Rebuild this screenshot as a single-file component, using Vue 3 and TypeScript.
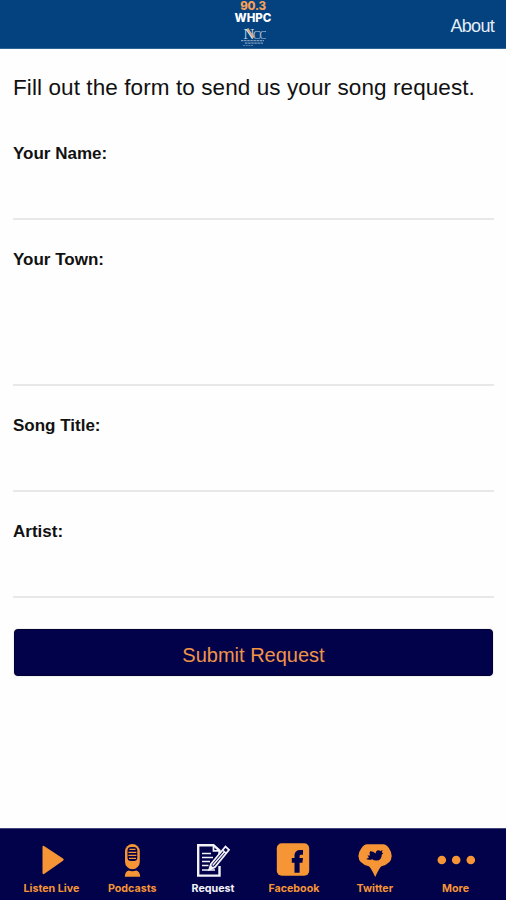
<script setup lang="ts">
import { ref } from 'vue'

interface Field {
  id: string
  label: string
  multiline?: boolean
}

interface Tab {
  id: string
  label: string
}

const fields: Field[] = [
  { id: 'name', label: 'Your Name:' },
  { id: 'town', label: 'Your Town:', multiline: true },
  { id: 'title', label: 'Song Title:' },
  { id: 'artist', label: 'Artist:' },
]

const tabs: Tab[] = [
  { id: 'listen', label: 'Listen Live' },
  { id: 'podcasts', label: 'Podcasts' },
  { id: 'request', label: 'Request' },
  { id: 'facebook', label: 'Facebook' },
  { id: 'twitter', label: 'Twitter' },
  { id: 'more', label: 'More' },
]

const values = ref<Record<string, string>>({ name: '', town: '', title: '', artist: '' })
const active = ref('request')
</script>

<template>
  <div class="screen">
    <header class="topbar">
      <div class="brand">
        <span class="freq">90.3</span>
        <span class="call">WHPC</span>
        <svg class="crest" width="26" height="23" viewBox="0 0 26 23">
          <text class="crest-text" x="3.5" y="13.5"><tspan class="crest-n">N</tspan><tspan class="crest-cc">CC</tspan></text>
          <path d="M7.5 3.5L13.6 12.5" stroke="#e3ab80" stroke-width="1.8" />
          <path d="M1 15.7H24M5 18.1H23" stroke="#7f9dbe" stroke-width="1.2" stroke-dasharray="2.5 .6" />
          <path d="M3 20.5H13" stroke="#587fab" stroke-width="1" stroke-dasharray="2 .7" />
        </svg>
      </div>
      <a class="about">About</a>
    </header>

    <main class="content">
      <p class="intro"><span>Fill out the form to send us your song request.</span></p>
      <form class="form" @submit.prevent>
        <div v-for="f in fields" :key="f.id" class="field">
          <label :for="f.id"><span>{{ f.label }}</span></label>
          <textarea v-if="f.multiline" :id="f.id" v-model="values[f.id]" class="control tall"></textarea>
          <input v-else :id="f.id" v-model="values[f.id]" class="control" type="text" />
        </div>
        <button class="submit" type="submit"><span>Submit Request</span></button>
      </form>
    </main>

    <nav class="tabs">
      <button
        v-for="t in tabs"
        :key="t.id"
        type="button"
        class="tab"
        :class="[t.id, { active: active === t.id }]"
        @click="active = t.id"
      >
        <svg class="icon" width="40" height="36" viewBox="0 0 40 36" fill="currentColor">
          <path
            v-if="t.id === 'listen'"
            d="M11.5 5.2Q11.5 3 13.4 4.2L32 16.6Q33.6 17.7 32 18.8L13.4 31.8Q11.5 33 11.5 30.8Z"
          />
          <g v-else-if="t.id === 'podcasts'">
            <rect x="13" y="2" width="14.8" height="25.2" rx="7.4" />
            <rect x="15.5" y="5" width="9.8" height="14" rx="3.5" fill="#02024b" />
            <path d="M17.5 7.4H23.5M16.4 10.4H24.4M16.4 13.4H24.4M17 16.4H24" stroke="currentColor" stroke-width="1.4" />
            <path d="M12.8 34.8Q13 29.4 16.6 28.4Q20.5 30 24.2 28.4Q28 29.4 28.2 34.8Z" />
          </g>
          <g v-else-if="t.id === 'request'" fill="none" stroke="currentColor">
            <path d="M26.5 12V8.5L20.5 3.2H5.2V33.6H26.5V24" stroke-width="2.4" />
            <path d="M20.5 3V8.8H26.5" stroke-width="1.8" />
            <path d="M9 11.5H18M9 15.5H20M9 19.5H17M9 23.5H15.5M9 28H22" stroke-width="1.5" />
            <path d="M18 22L32.5 4.5L36 7.8L21.8 25.2L16.2 27.6Z" fill="#02024b" stroke-width="1.8" />
            <path d="M29.5 8L33 11.2M19.7 23.5L32 9.2" stroke-width="1.5" />
            <path d="M15.8 28.2L17.6 23L21 26Z" fill="currentColor" stroke="none" />
          </g>
          <g v-else-if="t.id === 'facebook'">
            <rect x="2.8" y="1.2" width="32.4" height="32.6" rx="5" />
            <path
              d="M20.5 30.7V20.8H17.8V16H20.5V13.6C20.5 10 22.8 8 26.6 8H29V12.8H27.4C26 12.8 25.6 13.4 25.6 14.5V16H29L28.4 20.8H25.6V30.7Z"
              fill="#02024b"
            />
          </g>
          <g v-else-if="t.id === 'twitter'">
            <path d="M12 2.2H28Q31.4 2.4 34 6.2Q36.7 10 36.7 14Q36.5 21.8 26.5 24.2Q24.7 25 20.2 35Q15.6 25 13.8 24.2Q3.6 21.8 3.4 14Q3.4 10 6.4 6.2Q9 2.4 12 2.2Z" />
            <path
              d="M15.2 9.2Q17.6 8.8 20.6 11.6Q20.8 8.4 23.4 8.2Q25 8.4 25.4 9.2L27.6 7.8L26.8 10.2L28.2 11.4L26.8 12.6Q26.6 18.6 21.5 18.6Q18.5 18.4 17.4 17.2Q14 18.5 11.2 17L14 15.4L12.4 13.6L15 13.4Q13.6 11.4 15.2 9.2Z"
              fill="#02024b"
            />
          </g>
          <g v-else>
            <circle cx="5.8" cy="18" r="4.3" />
            <circle cx="20.2" cy="18" r="4.3" />
            <circle cx="34.8" cy="18" r="4.3" />
          </g>
        </svg>
        <span class="tab-label">{{ t.label }}</span>
      </button>
    </nav>
  </div>
</template>

<style>
body {
  margin: 0;
  background: #fefefe;
}
</style>

<style scoped>
.screen {
  display: flex;
  flex-direction: column;
  width: 506px;
  height: 900px;
  overflow: hidden;
  background: #fefefe;
  color: #111;
  font-family: "Liberation Sans", Arial, sans-serif;
}

.topbar {
  display: grid;
  grid-template-columns: 1fr auto 1fr;
  flex: none;
  box-sizing: border-box;
  height: 49px;
  background: #03427f;
  border-bottom: 1px solid #2e6595;
}

.brand {
  grid-column: 2;
  display: flex;
  flex-direction: column;
  align-items: center;
  font-family: Inter, "Liberation Sans", sans-serif;
  font-weight: 800;
}

.freq {
  height: 12px;
  color: #f5a05a;
  font-size: 11.5px;
  line-height: 13px;
  letter-spacing: -0.3px;
}

.call {
  height: 13px;
  color: #fff;
  font-size: 11.5px;
  line-height: 12px;
}

.crest-text {
  font-family: "Liberation Serif", serif;
  font-weight: 700;
  letter-spacing: -1.6px;
}

.crest-n {
  fill: #d9e0e9;
  font-size: 15px;
  font-weight: 400;
}

.crest-cc {
  fill: #a9b8cb;
  font-size: 12px;
  font-weight: 400;
}

.about {
  justify-self: end;
  margin-right: 12px;
  color: #e5edf6;
  font-size: 18px;
  line-height: 52px;
  letter-spacing: -0.7px;
}

.content {
  flex: 1;
  padding: 0 12px 0 13px;
}

.intro {
  margin: 0;
  padding-top: 24px;
  height: 70px;
  font-size: 22.5px;
  line-height: 30px;
  letter-spacing: 0.09px;
  white-space: nowrap;
}

.form {
  display: flex;
  flex-direction: column;
  gap: 29px;
}

.field {
  display: flex;
  flex-direction: column;
}

.field label {
  height: 20px;
  font-size: 17px;
  font-weight: 700;
  line-height: 21px;
}

.control {
  box-sizing: border-box;
  width: 100%;
  height: 57px;
  margin: 0;
  padding: 8px 0;
  border: 0;
  border-bottom: 2px solid #e8e8e8;
  border-radius: 0;
  background: transparent;
  font: 18px "Liberation Sans", Arial, sans-serif;
  outline: none;
  resize: none;
}

.tall {
  height: 117px;
}

.submit {
  height: 47px;
  margin: 2px 1px 0;
  padding: 6px 0 0;
  border: 1px solid #000034;
  border-radius: 4px;
  background: #02024b;
  color: #ef9447;
  font: 20px "Liberation Sans", Arial, sans-serif;
  box-shadow: 0 0 1px #777;
}

.tabs {
  display: grid;
  grid-template-columns: repeat(6, 1fr);
  flex: none;
  box-sizing: border-box;
  height: 72px;
  padding: 13px 10px 0 11px;
  background: #02024b;
  border-top: 1px solid #44447c;
}

.tab {
  display: flex;
  flex-direction: column;
  align-items: center;
  padding: 0;
  border: 0;
  background: none;
  color: #f59535;
  font-family: Inter, "Liberation Sans", sans-serif;
}

.tab.active {
  color: #f2f2f7;
}

.icon {
  display: block;
  flex: none;
}

.tab-label {
  font-size: 10.7px;
  font-weight: 700;
  line-height: 22px;
  white-space: nowrap;
}
</style>
